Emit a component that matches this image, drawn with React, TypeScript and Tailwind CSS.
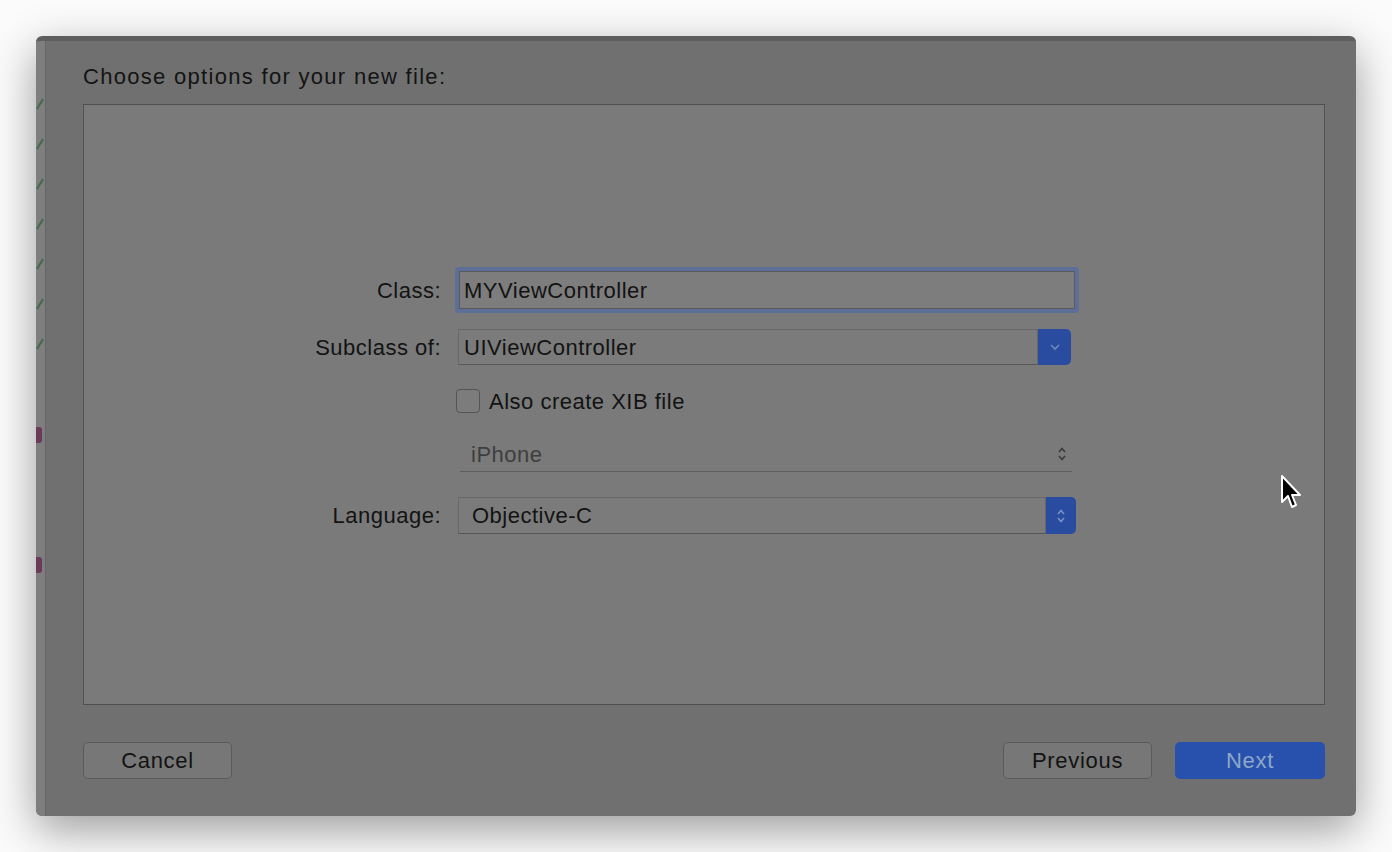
import React from "react";

const font = { fontFamily: '"Liberation Sans", Arial, sans-serif' };

function Chevron() {
  return (
    <svg width="12" height="8" viewBox="0 0 12 8">
      <path d="M2 2 L6 6 L10 2" stroke="#6f86b8" strokeWidth="1.6" fill="none" />
    </svg>
  );
}

function Stepper({ color }: { color: string }) {
  return (
    <svg width="12" height="20" viewBox="0 0 12 20">
      <path d="M3 8 L6 4.5 L9 8" stroke={color} strokeWidth="1.6" fill="none" />
      <path d="M3 12 L6 15.5 L9 12" stroke={color} strokeWidth="1.6" fill="none" />
    </svg>
  );
}

function Check({ color }: { color: string }) {
  return (
    <svg width="8" height="16" viewBox="0 0 8 16">
      <path d="M1 12 L7 2" stroke={color} strokeWidth="2" fill="none" />
    </svg>
  );
}

export default function App() {
  return (
    <div
      className="relative w-[1392px] h-[852px] bg-[#fbfbfb] pt-[36px] pl-[36px] overflow-hidden"
      style={font}
    >
      <div className="w-[1320px] h-[780px] rounded-[6px] bg-[#707070] shadow-[0_14px_44px_rgba(0,0,0,0.38)] flex flex-col overflow-hidden border-t-[5px] border-[#5e5e5e]">
        <div className="flex flex-1">
          {/* strip of the window behind */}
          <div className="w-[10px] bg-[#7e7e7e] border-r border-[#666] flex flex-col items-start pt-[56px] gap-[24px]">
            <Check color="#3f6b4a" />
            <Check color="#3f6b4a" />
            <Check color="#3f6b4a" />
            <Check color="#3f6b4a" />
            <Check color="#3f6b4a" />
            <Check color="#3f6b4a" />
            <Check color="#3f6b4a" />
            <div className="mt-[50px] w-[6px] h-[16px] bg-[#6b3a57] rounded-r-[3px]" />
            <div className="mt-[90px] w-[6px] h-[16px] bg-[#6b3a57] rounded-r-[3px]" />
          </div>
          <div className="flex-1 flex flex-col pl-[37px] pr-[31px]">
            <div className="h-[63px] flex items-center pt-[8px] text-[22px] tracking-[1.3px] text-[#141414]">
              Choose options for your new file:
            </div>
            <div className="h-[601px] bg-[#7a7a7a] border border-[#505050] pt-[162px] pl-[156px]">
              <div className="grid grid-cols-[201px_1fr] gap-x-[14px] text-[22px] tracking-[0.5px] text-[#131313]">
                {/* Class */}
                <div className="h-[46px] flex items-center justify-end">Class:</div>
                <div className="h-[46px] w-[624px] rounded-[4px] border-[4px] border-[#5d6f99] bg-[#7d7d7d] flex items-center">
                  <div className="h-full flex-1 border border-[#5a5a5a] flex items-center pl-[4px]">
                    MYViewController
                  </div>
                </div>
                <div className="h-[16px] col-span-2" />
                {/* Subclass */}
                <div className="h-[36px] flex items-center justify-end">Subclass of:</div>
                <div className="h-[36px] w-[613px] ml-[3px] flex">
                  <div className="flex-1 border border-[#686868] border-b-[#585858] bg-[#7b7b7b] flex items-center pl-[5px]">
                    UIViewController
                  </div>
                  <div className="w-[33px] bg-[#2a4ca0] rounded-r-[5px] flex items-center justify-center">
                    <Chevron />
                  </div>
                </div>
                <div className="h-[24px] col-span-2" />
                {/* Checkbox */}
                <div className="h-[24px]" />
                <div className="h-[24px] flex items-center">
                  <div className="w-[24px] h-[24px] ml-[1px] rounded-[4px] border border-[#555] bg-[#7c7c7c]" />
                  <span className="ml-[9px]">Also create XIB file</span>
                </div>
                <div className="h-[24px] col-span-2" />
                {/* iPhone */}
                <div className="h-[35px]" />
                <div className="h-[35px] w-[612px] ml-[5px] border-b border-[#5e5e5e] flex items-center pl-[11px] pr-[4px] text-[#3e3e3e]">
                  <span className="flex-1">iPhone</span>
                  <Stepper color="#3a3a3a" />
                </div>
                <div className="h-[25px] col-span-2" />
                {/* Language */}
                <div className="h-[37px] flex items-center justify-end">Language:</div>
                <div className="h-[37px] w-[618px] ml-[3px] flex">
                  <div className="flex-1 border border-[#686868] border-b-[#555] bg-[#7b7b7b] flex items-center pl-[13px]">
                    Objective-C
                  </div>
                  <div className="w-[30px] bg-[#2a4ca0] rounded-r-[5px] flex items-center justify-center">
                    <Stepper color="#7a90bf" />
                  </div>
                </div>
              </div>
            </div>
            <div className="flex items-center mt-[37px] text-[22px] tracking-[0.7px]">
              <div className="w-[149px] h-[37px] rounded-[5px] border border-[#5a5a5a] bg-[#777] flex items-center justify-center text-[#131313]">
                Cancel
              </div>
              <div className="flex-1" />
              <div className="w-[149px] h-[37px] rounded-[5px] border border-[#5a5a5a] bg-[#777] flex items-center justify-center text-[#131313]">
                Previous
              </div>
              <div className="w-[150px] h-[37px] ml-[23px] rounded-[5px] bg-[#2851ad] flex items-center justify-center text-[#8ea7c9]">
                Next
              </div>
            </div>
          </div>
        </div>
      </div>
      {/* mouse cursor */}
      <svg className="absolute left-[1280px] top-[474px]" width="24" height="38" viewBox="0 0 24 38">
        <path
          d="M2 2 L2 28 L8 22 L12 33 L16 31 L12 21 L20 21 Z"
          fill="#000"
          stroke="#fff"
          strokeWidth="2"
          strokeLinejoin="round"
        />
      </svg>
    </div>
  );
}
